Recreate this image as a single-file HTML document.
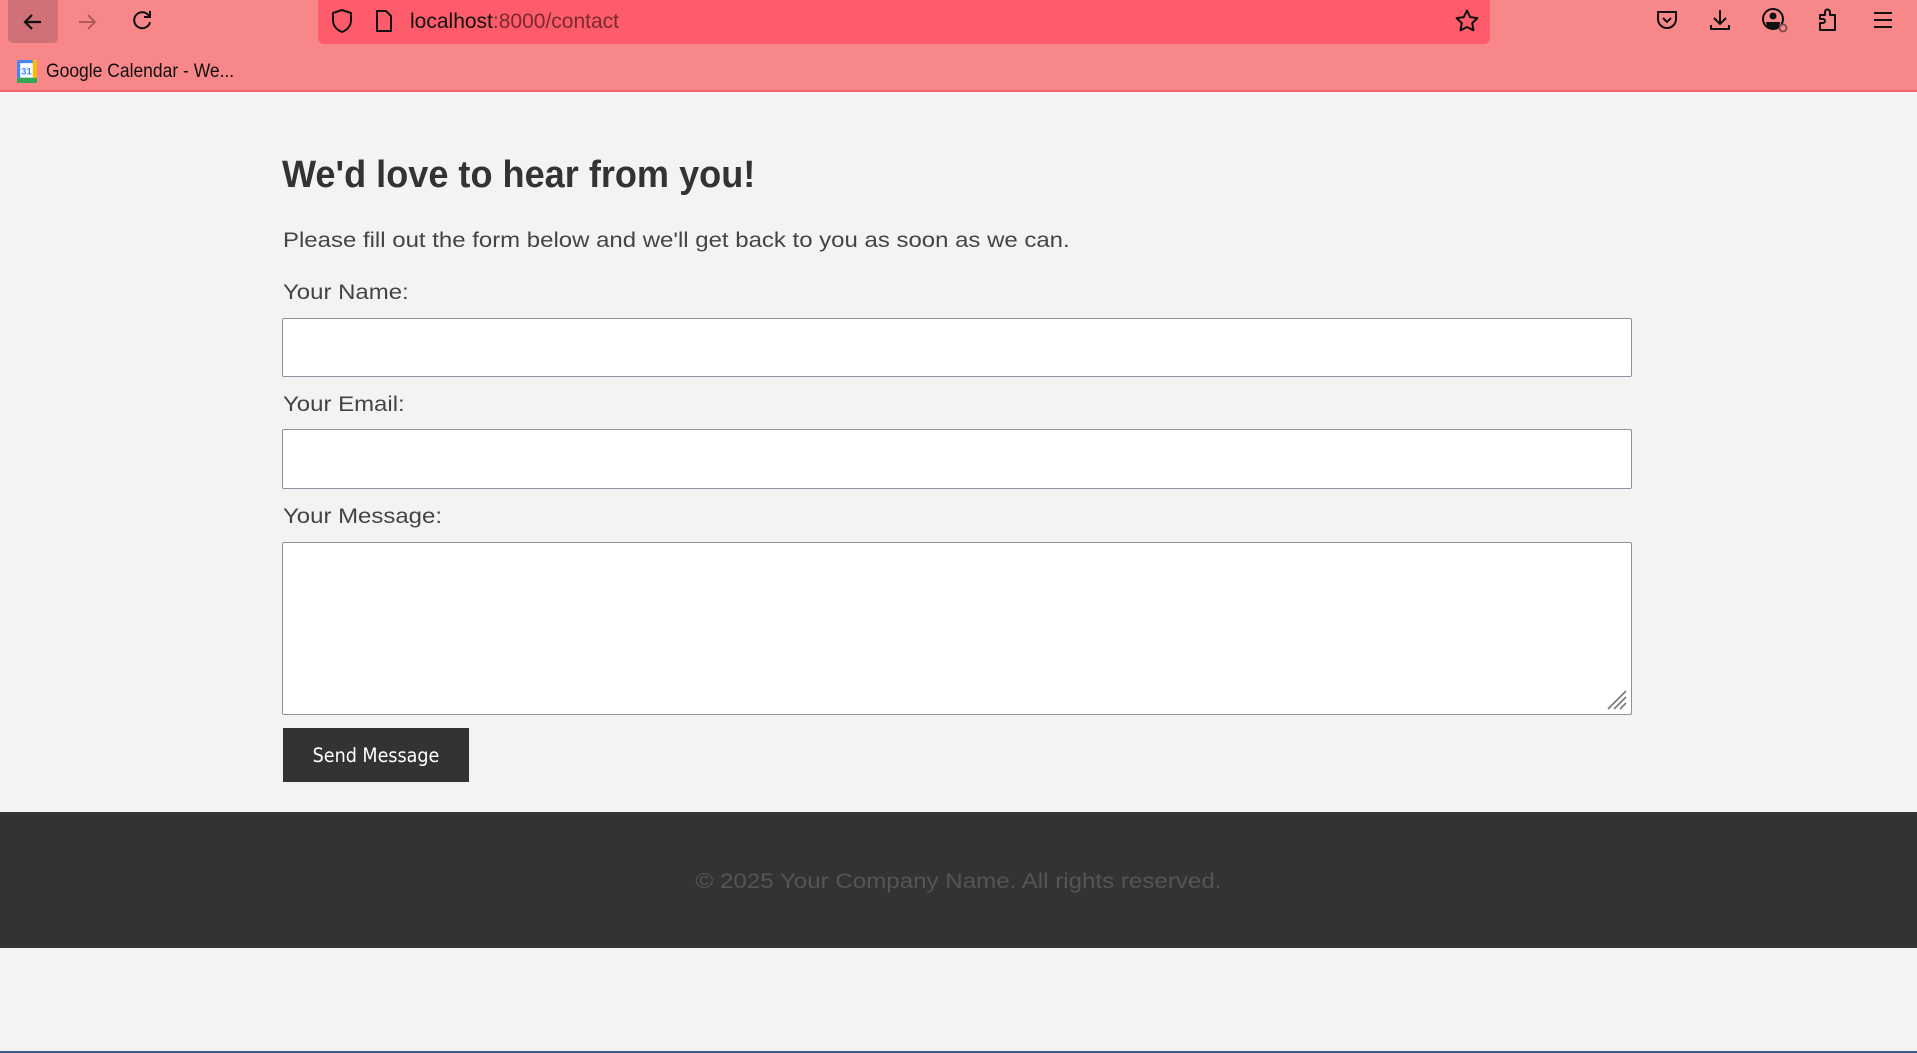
<!DOCTYPE html>
<html><head><meta charset="utf-8"><style>
*{margin:0;padding:0;box-sizing:border-box}
body{width:1917px;height:1053px;overflow:hidden;background:#f3f3f3;font-family:"Liberation Sans",Arial,sans-serif;position:relative}
.bar{position:absolute;left:0;top:0;width:1917px;height:92px;background:#f8878a;border-bottom:2px solid #f6616b}
.url{position:absolute;left:318px;top:0;width:1172px;height:44px;background:#fe5c6a;border-radius:0 0 6px 6px}
.back{position:absolute;left:8px;top:0;width:50px;height:43px;background:#cf7176;border-radius:0 0 5px 5px}
.ic{position:absolute}
.t{position:absolute;white-space:nowrap;transform-origin:0 50%}
.in{position:absolute;left:282px;width:1350px;background:#fff;border:1px solid #8f8f9d;border-radius:2px}
</style></head><body>
<div class="bar">
<div class="back"></div>
<svg class="ic" style="left:20px;top:9px" width="26" height="26" viewBox="0 0 26 26"><path d="M21 13H5M12 6l-7 7 7 7" stroke="#111" stroke-width="2.2" fill="none"/></svg>
<svg class="ic" style="left:74px;top:9px" width="26" height="26" viewBox="0 0 26 26"><path d="M5 13h16M14 6l7 7-7 7" stroke="#b05a5e" stroke-width="2" fill="none"/></svg>
<svg class="ic" style="left:129px;top:8px" width="26" height="26" viewBox="0 0 26 26"><path d="M20 8A8 8 0 1 0 21 14" stroke="#111" stroke-width="2" fill="none"/><path d="M21 3v6h-6" stroke="#111" stroke-width="2" fill="none"/></svg>
<div class="url"></div>
<svg class="ic" style="left:330px;top:8px" width="24" height="26" viewBox="0 0 24 26"><path d="M12 2L3 5v7c0 6 4 10 9 12 5-2 9-6 9-12V5z" stroke="#111" stroke-width="2" fill="none"/></svg>
<svg class="ic" style="left:373px;top:9px" width="22" height="24" viewBox="0 0 22 24"><path d="M4 2h9l5 5v15H4z" stroke="#111" stroke-width="2" fill="none" stroke-linejoin="round"/></svg>
<div class="t" style="left:410px;top:10px;font-size:21px;color:#111">localhost<span style="color:#7a2a30">:8000/contact</span></div>
<svg class="ic" style="left:1454px;top:8px" width="26" height="26" viewBox="0 0 26 26"><path d="M13 2.5l3.2 6.6 7.2 1-5.2 5 1.3 7.2L13 19l-6.5 3.3 1.3-7.2-5.2-5 7.2-1z" stroke="#111" stroke-width="2" fill="none" stroke-linejoin="round"/></svg>
<svg class="ic" style="left:1655px;top:8px" width="24" height="24" viewBox="0 0 24 24"><path d="M3 4h18v7a9 9 0 0 1-18 0z" stroke="#111" stroke-width="2" fill="none"/><path d="M8 10l4 4 4-4" stroke="#111" stroke-width="2" fill="none"/></svg>
<svg class="ic" style="left:1708px;top:7px" width="24" height="26" viewBox="0 0 24 26"><path d="M12 3v14M6 11l6 6 6-6M3 18v4h18v-4" stroke="#111" stroke-width="2" fill="none"/></svg>
<svg class="ic" style="left:1761px;top:7px" width="28" height="26" viewBox="0 0 28 26"><circle cx="12" cy="12" r="10" stroke="#111" stroke-width="2" fill="none"/><circle cx="12" cy="9" r="3.5" fill="#111"/><path d="M5 15h14a7 7 0 0 1-14 0z" fill="#111"/><circle cx="22" cy="21" r="3.5" stroke="#7a4a4e" stroke-width="1.8" fill="#f8878a"/></svg>
<svg class="ic" style="left:1817px;top:7px" width="24" height="26" viewBox="0 0 24 26"><path d="M3 16h3a2 2 0 0 0 0-4H3V8h5V5a2.5 2.5 0 0 1 5 0v3h5v15H3z" stroke="#111" stroke-width="2" fill="none" stroke-linejoin="round"/></svg>
<svg class="ic" style="left:1872px;top:9px" width="22" height="22" viewBox="0 0 22 22"><path d="M2 4h18M2 11h18M2 18h18" stroke="#111" stroke-width="2"/></svg>
<svg class="ic" style="left:16px;top:60px" width="22" height="23" viewBox="0 0 19 22"><rect x="0" y="0" width="19" height="22" rx="2" fill="#4285f4"/><rect x="3" y="3" width="13" height="14" fill="#fff"/><rect x="0" y="17" width="19" height="5" fill="#34a853"/><rect x="15" y="0" width="4" height="17" fill="#fbbc04"/><text x="4" y="14" font-size="9" font-family="Liberation Sans" fill="#4285f4" font-weight="bold">31</text></svg>
<div class="t" style="left:46px;top:61px;font-size:19px;color:#111;transform:scaleX(0.92)">Google Calendar - We...</div>
</div>

<div class="t" style="left:282px;top:154px;font-size:38px;font-weight:bold;color:#333;transform:scaleX(0.95)">We'd love to hear from you!</div>
<div class="t" style="left:283px;top:227px;font-size:21.6px;color:#444;transform:scaleX(1.11)">Please fill out the form below and we'll get back to you as soon as we can.</div>
<div class="t" style="left:283px;top:279px;font-size:21.6px;color:#444;transform:scaleX(1.11)">Your Name:</div>
<div class="in" style="top:318px;height:59px"></div>
<div class="t" style="left:283px;top:391px;font-size:21.6px;color:#444;transform:scaleX(1.11)">Your Email:</div>
<div class="in" style="top:429px;height:60px"></div>
<div class="t" style="left:283px;top:503px;font-size:21.6px;color:#444;transform:scaleX(1.11)">Your Message:</div>
<div class="in" style="top:542px;height:173px"></div>
<svg class="ic" style="left:1606px;top:689px" width="22" height="22" viewBox="0 0 22 22"><path d="M2 20L20 2M8 20L20 8M14 20L20 14" stroke="#777" stroke-width="1.6"/></svg>
<div style="position:absolute;left:283px;top:728px;width:186px;height:54px;background:#333"></div>
<div class="t" style="left:283px;top:744px;width:186px;text-align:center;font-size:19.5px;color:#fff;font-family:'DejaVu Sans Condensed','Liberation Sans',sans-serif">Send Message</div>
<div style="position:absolute;left:0;top:812px;width:1917px;height:136px;background:#333"></div>
<div class="t" style="left:0;top:868px;width:1917px;text-align:center;font-size:21.6px;color:#555;transform-origin:50% 50%;transform:scaleX(1.117)">© 2025 Your Company Name. All rights reserved.</div>
<div style="position:absolute;left:0;top:1051px;width:1917px;height:2px;background:#3a5f8a"></div>
</body></html>
